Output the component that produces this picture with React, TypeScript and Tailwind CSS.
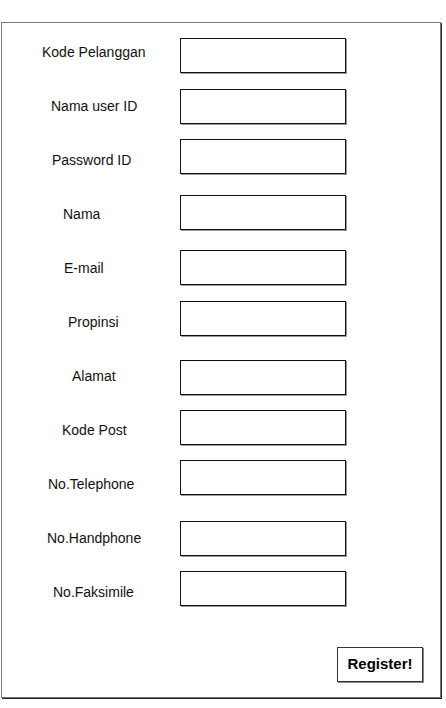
import React from "react";

// form rows: label offset inside the left column, gap above each input box
const fields = [
  { label: "Kode Pelanggan", indent: "pl-[40px]", gap: "mt-[15px]" },
  { label: "Nama user ID", indent: "pl-[49px]", gap: "mt-[16px]" },
  { label: "Password ID", indent: "pl-[50px]", gap: "mt-[15px]" },
  { label: "Nama", indent: "pl-[61px]", gap: "mt-[21px]" },
  { label: "E-mail", indent: "pl-[62px]", gap: "mt-[20px]" },
  { label: "Propinsi", indent: "pl-[66px]", gap: "mt-[16px]" },
  { label: "Alamat", indent: "pl-[70px]", gap: "mt-[24px]" },
  { label: "Kode Post", indent: "pl-[60px]", gap: "mt-[15px]" },
  { label: "No.Telephone", indent: "pl-[46px]", gap: "mt-[15px]" },
  { label: "No.Handphone", indent: "pl-[45px]", gap: "mt-[26px]" },
  { label: "No.Faksimile", indent: "pl-[51px]", gap: "mt-[15px]" },
];

const App = () => {
  return (
    <div className="min-h-[708px] bg-white pt-[22px] pl-px font-['Liberation_Sans',Arial,sans-serif] text-[14px] text-[#111]">
      <div className="flex h-[676px] w-[440px] flex-col border border-[#777] shadow-[1px_1px_0_#222]">
        <div className="flex">
          {/* labels */}
          <div className="flex w-[178px] flex-col pt-[2px]">
            {fields.map((f) => (
              <div key={f.label} className={`flex h-[54px] items-center ${f.indent}`}>
                {f.label}
              </div>
            ))}
          </div>

          {/* inputs */}
          <div className="flex flex-col">
            {fields.map((f) => (
              <input
                key={f.label}
                type="text"
                className={`block h-[35px] w-[166px] border border-[#111] bg-white shadow-[1px_1px_0_#999] outline-none ${f.gap}`}
              />
            ))}
          </div>
        </div>

        <div className="mt-auto flex justify-end pr-[17px] pb-[15px]">
          <button
            type="button"
            className="flex h-[35px] w-[86px] items-center justify-center border border-[#333] bg-white text-[15px] font-bold text-black shadow-[1px_1px_0_#888]"
          >
            Register!
          </button>
        </div>
      </div>
    </div>
  );
};

export default App;
